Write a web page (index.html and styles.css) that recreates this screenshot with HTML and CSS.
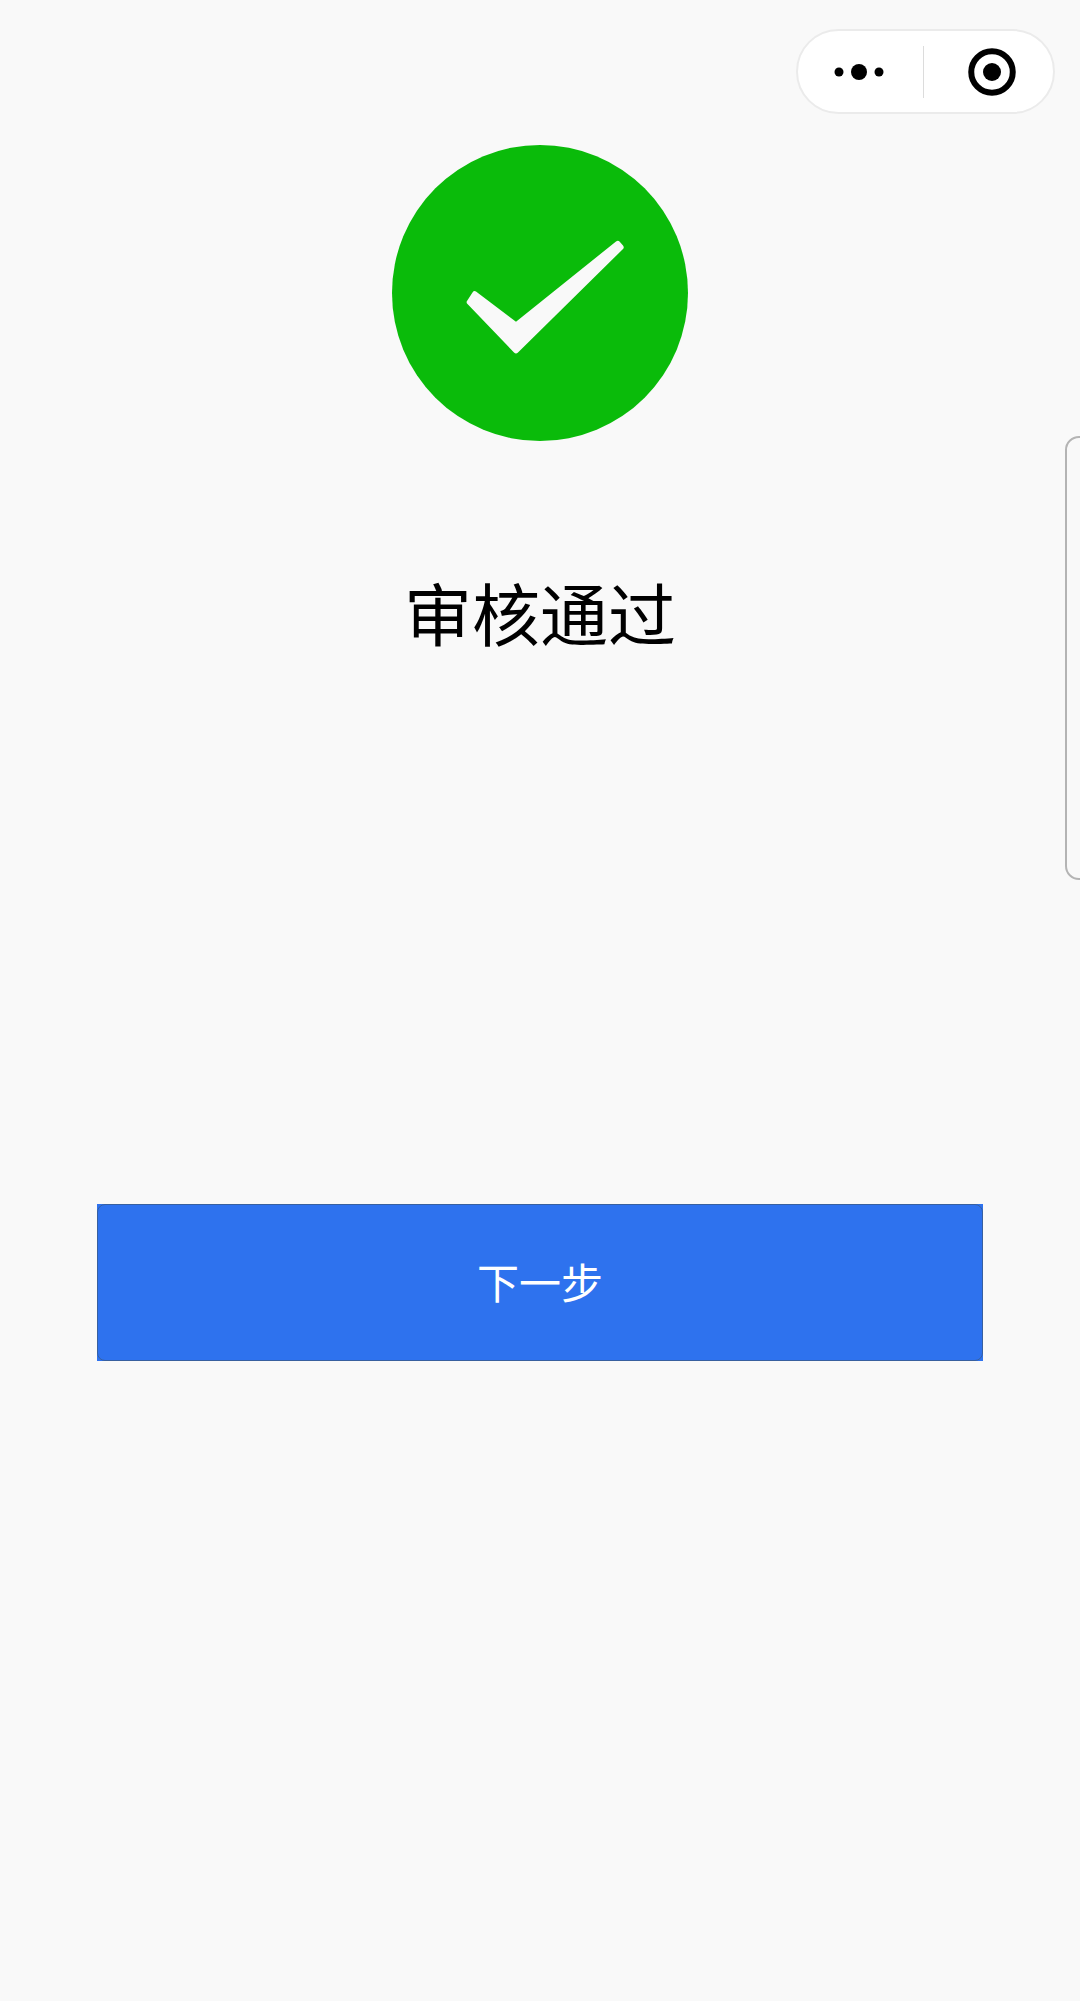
FILE: index.html
```html
<!DOCTYPE html>
<html lang="zh-CN">
<head>
<meta charset="utf-8">
<title>审核通过</title>
<link rel="stylesheet" href="styles.css">
</head>
<body>
<div class="capsule">
  <div class="capsule-part capsule-more">
    <svg class="icon-more" viewBox="0 0 50 16" width="50" height="16"><circle cx="5" cy="8" r="4.500"/><circle cx="25" cy="8" r="8"/><circle cx="45" cy="8" r="4.500"/></svg>
  </div>
  <div class="capsule-divider"></div>
  <div class="capsule-part capsule-close">
    <svg class="icon-close" viewBox="0 0 48 48" width="48" height="48"><circle cx="24" cy="24" r="20.750" fill="none" stroke="#000" stroke-width="6"/><circle cx="24" cy="24" r="9"/></svg>
  </div>
</div>
<div class="side-panel"></div>
<main class="page">
  <svg class="status-icon" viewBox="0 0 296 296" width="296" height="296">
    <circle cx="148" cy="148" r="148" fill="#0abb0a"/>
    <path d="M84 146.500 L124 176.700 L224 96.500 Q226 95 227.500 96.500 L231 100.500 Q232.500 102.500 231 104 L126 207.500 Q124 209.500 122 207.500 L75.500 159 Q74 157.500 75 156 L80.500 147.500 Q82 145.200 84 146.500 Z" fill="#f9f9f9"/>
  </svg>
  <h1 class="title">审核通过</h1>
  <button class="next" type="button">下一步</button>
</main>
</body>
</html>
```
FILE: styles.css
```css
html, body {
  margin: 0;
  padding: 0;
}
body {
  width: 1080px;
  height: 2001px;
  background: #f9f9f9;
  position: relative;
  overflow: hidden;
  font-family: "Noto Sans CJK SC", "Liberation Sans", sans-serif;
}
.page {
  display: flex;
  flex-direction: column;
  align-items: center;
  padding-top: 145px;
}
.status-icon {
  display: block;
}
.title {
  margin: 123px 0 0;
  font-size: 68px;
  line-height: 96px;
  font-weight: 400;
  color: #000;
}
.next {
  position: relative;
  margin-top: 544px;
  width: 886px;
  height: 157px;
  background: #2e72ee;
  border: 0;
  color: #fff;
  font-family: inherit;
  font-size: 42px;
  padding: 0 0 4px;
}
.next::after {
  content: "";
  position: absolute;
  inset: 0;
  border: 1px solid #38609f;
  border-radius: 8px;
}
.capsule {
  position: absolute;
  left: 796px;
  top: 29px;
  width: 259px;
  height: 85px;
  box-sizing: border-box;
  background: #fff;
  border: 2px solid #ebebeb;
  border-radius: 43px;
  display: flex;
  align-items: center;
}
.capsule-part {
  flex: 1 1 0;
  display: flex;
  align-items: center;
  justify-content: center;
}
.capsule-more {
  padding-right: 3px;
}
.capsule-close {
  padding-left: 7px;
}
.capsule-divider {
  width: 1px;
  height: 52px;
  background: #dcdcdc;
}
.side-panel {
  position: absolute;
  left: 1065px;
  top: 436px;
  width: 40px;
  height: 444px;
  box-sizing: border-box;
  border: 2px solid #b4b4b4;
  border-radius: 14px;
}
```
